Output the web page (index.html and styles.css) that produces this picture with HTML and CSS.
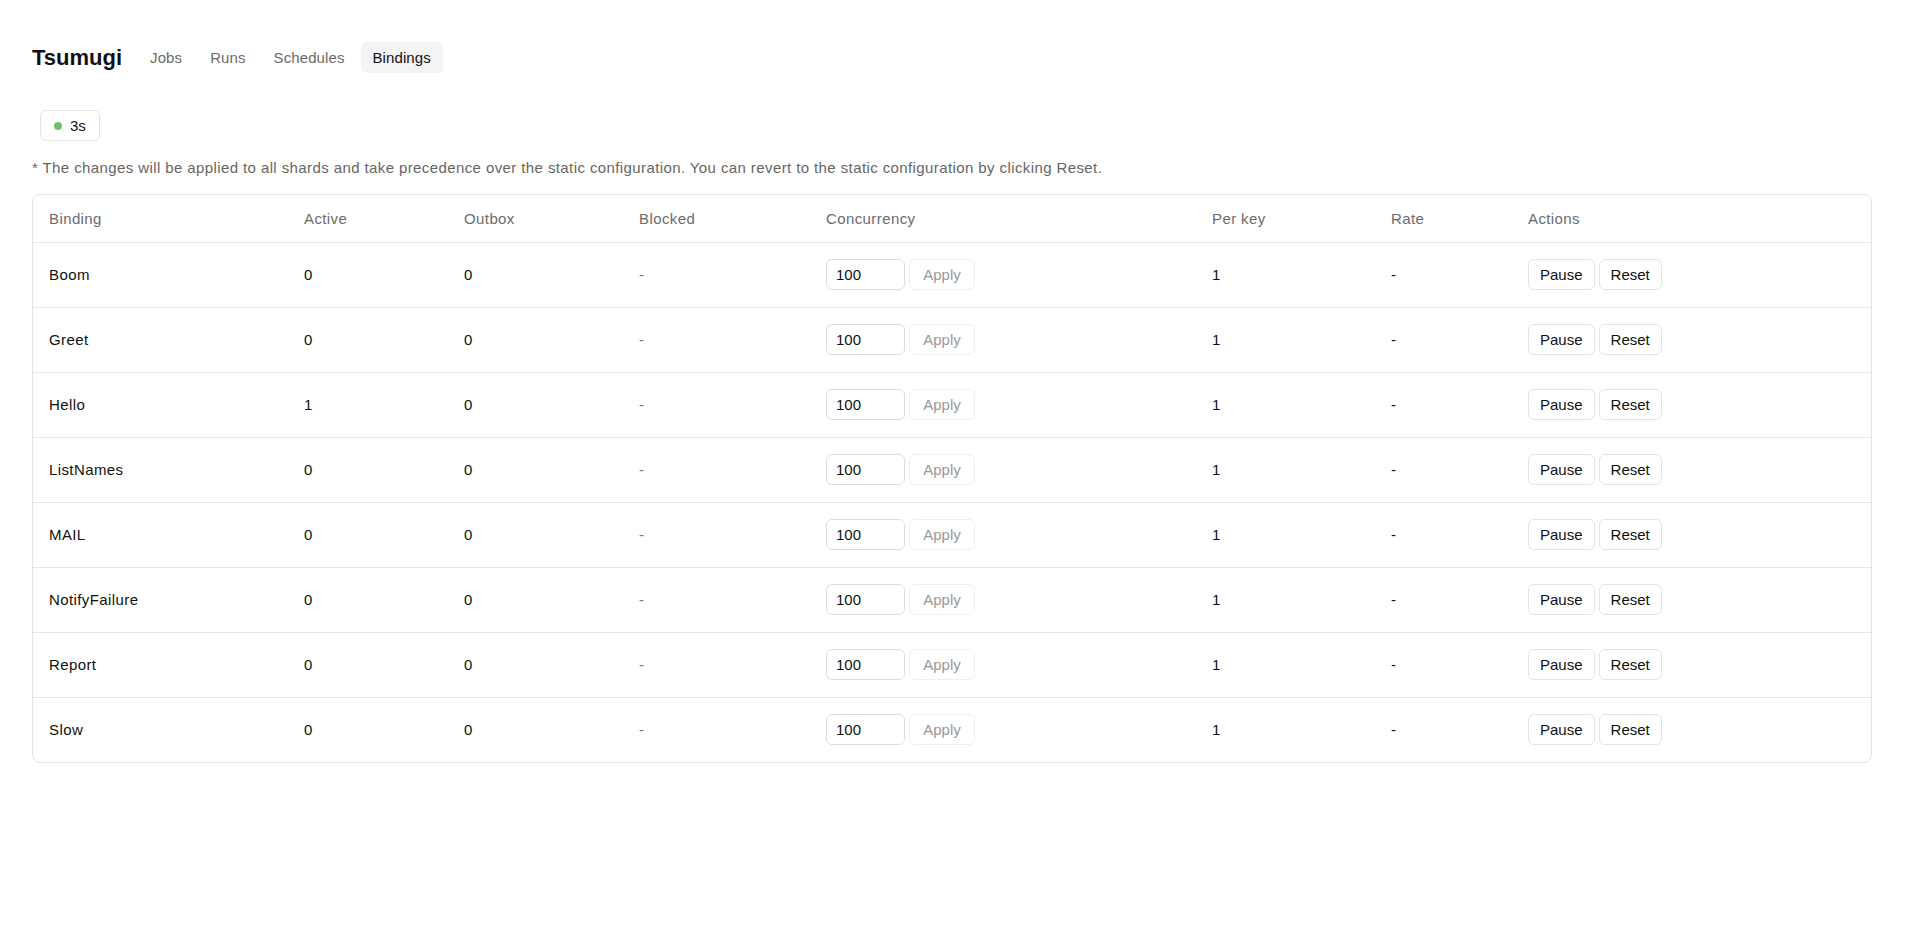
FILE: index.html
```html
<!doctype html>

<html lang="en">
<head>
  <meta charset="utf-8">
  <meta name="viewport" content="width=device-width, initial-scale=1">

  <title>Tsumugi - Bindings</title>

  <link rel="stylesheet" href="styles.css">
</head>
<body>
  <div class="app">
    <header class="topbar">
      <span class="brand">Tsumugi</span>
      <nav class="nav">
        <a class="nav-item" href="#">Jobs</a>
        <a class="nav-item" href="#">Runs</a>
        <a class="nav-item" href="#">Schedules</a>
        <a class="nav-item current" href="#">Bindings</a>
      </nav>
    </header>

    <main>
      <div class="refresh"><span class="dot"></span>3s</div>
      <p class="note">* The changes will be applied to all shards and take precedence over the static configuration. You can revert to the static configuration by clicking Reset.</p>

      <div class="table-wrap">
        <table>
          <thead>
            <tr>
              <th class="c-name">Binding</th>
              <th class="c-active">Active</th>
              <th class="c-outbox">Outbox</th>
              <th class="c-blocked">Blocked</th>
              <th class="c-conc">Concurrency</th>
              <th class="c-perkey">Per key</th>
              <th class="c-rate">Rate</th>
              <th class="c-actions">Actions</th>
            </tr>
          </thead>
          <tbody id="rows"></tbody>
        </table>
      </div>
    </main>
  </div>

  <script>
    const bindings = [
      ['Boom', 0], ['Greet', 0], ['Hello', 1], ['ListNames', 0],
      ['MAIL', 0], ['NotifyFailure', 0], ['Report', 0], ['Slow', 0]
    ]
    const tbody = document.getElementById('rows')
    bindings.forEach(([name, active]) => {
      const tr = document.createElement('tr')
      tr.innerHTML = `
        <td>${name}</td>
        <td>${active}</td>
        <td>0</td>
        <td class="muted">-</td>
        <td><div class="conc"><input type="text" value="100"><button class="btn ghost">Apply</button></div></td>
        <td>1</td>
        <td>-</td>
        <td><div class="actions"><button class="btn">Pause</button><button class="btn">Reset</button></div></td>`
      tbody.appendChild(tr)
    })
  </script>
</body>
</html>
```

FILE: styles.css
```css
body {
  margin: 0;
  background-color: #fff;
  color: #111;
  font-family: "Liberation Sans", Arial, sans-serif;
  font-size: 15px;
}
.app {
  padding: 42px 48px 0 32px;
}
.topbar {
  display: flex;
  align-items: center;
  gap: 16px;
}
.brand {
  font-size: 22px;
  font-weight: bold;
}
.nav {
  display: flex;
  gap: 4px;
}
.nav-item {
  color: #6b6b6b;
  text-decoration: none;
  padding: 0 12px;
  height: 31px;
  line-height: 31px;
  border-radius: 6px;
  letter-spacing: 0.1px;
}
.nav-item.current {
  background-color: #f4f4f4;
  color: #111;
}
main {
  letter-spacing: 0.4px;
}
.refresh {
  display: inline-flex;
  align-items: center;
  gap: 8px;
  box-sizing: border-box;
  height: 31px;
  margin: 37px 0 0 8px;
  padding: 0 13px;
  border: 1px solid #e5e5e5;
  border-radius: 6px;
  letter-spacing: 0;
}
.dot {
  width: 8px;
  height: 8px;
  border-radius: 50%;
  background-color: #6cc36a;
}
.note {
  margin: 17px 0 16px;
  line-height: 20px;
  color: #666;
}
.table-wrap {
  border: 1px solid #e5e5e5;
  border-radius: 8px;
  overflow: hidden;
}
table {
  width: 100%;
  table-layout: fixed;
  border-collapse: collapse;
}
th,
td {
  box-sizing: border-box;
  padding: 0 16px;
  text-align: left;
  border-bottom: 1px solid #e5e5e5;
}
th {
  height: 47px;
  font-weight: normal;
  color: #6b6b6b;
}
td {
  height: 65px;
}
tbody tr:last-child td {
  border-bottom: 0;
}
td.muted {
  color: #777;
}
.c-name { width: 255px; }
.c-active { width: 160px; }
.c-outbox { width: 175px; }
.c-blocked { width: 187px; }
.c-conc { width: 386px; }
.c-perkey { width: 179px; }
.c-rate { width: 137px; }
.conc,
.actions {
  display: flex;
  gap: 4px;
}
.conc input {
  box-sizing: border-box;
  width: 79px;
  height: 31px;
  padding: 0 9px;
  border: 1px solid #ddd;
  border-radius: 6px;
  font: inherit;
  color: #111;
}
.btn {
  box-sizing: border-box;
  height: 31px;
  padding: 0 11px;
  background-color: #fff;
  border: 1px solid #e3e3e3;
  border-radius: 6px;
  font: inherit;
  color: #111;
}
.btn.ghost {
  width: 66px;
  border-color: #efefef;
  color: #999;
}
```
